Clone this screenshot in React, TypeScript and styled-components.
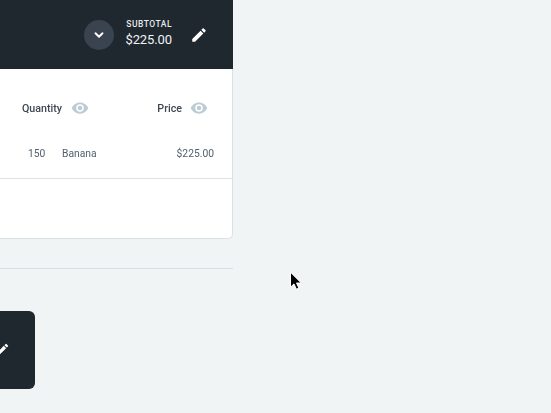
import React from "react";
import styled, { createGlobalStyle } from "styled-components";

const Global = createGlobalStyle`
  html, body { margin: 0; padding: 0; background: #f0f4f5; overflow: hidden; }
  body { width: 551px; height: 413px; font-family: "Roboto", "Liberation Sans", sans-serif; }
`;

const Page = styled.div`
  position: relative;
  width: 551px;
  height: 413px;
  display: flex;
  flex-direction: column;
  align-items: flex-start;
  overflow: hidden;
  filter: blur(0.2px);
`;

const Card = styled.section`
  width: 233px;
  height: 239px;
  display: flex;
  flex-direction: column;
  background: #fff;
  border-right: 1px solid #d9e1e7;
  border-bottom: 1px solid #d9e1e7;
  border-bottom-right-radius: 5px;
  box-sizing: border-box;
`;

const Header = styled.header`
  height: 69px;
  flex: none;
  background: #1f272f;
  margin-right: -1px;
  display: flex;
  align-items: center;
  justify-content: flex-end;
`;

const Toggle = styled.button`
  width: 30px;
  height: 30px;
  padding: 0;
  border: 0;
  border-radius: 50%;
  background: #3a4450;
  display: flex;
  align-items: center;
  justify-content: center;
  margin-right: 11px;
`;

const Subtotal = styled.div`
  display: flex;
  flex-direction: column;
  align-items: flex-end;
  color: #fff;
  margin-right: 18px;
  padding-bottom: 2px;
`;

const SubtotalLabel = styled.span`
  font-size: 8.5px;
  line-height: 11px;
  font-weight: 500;
  letter-spacing: 0.5px;
  color: #e6eaee;
`;

const SubtotalValue = styled.span`
  font-size: 13px;
  line-height: 18px;
  margin-top: 1px;
  font-weight: 400;
  letter-spacing: -0.1px;
  color: #f0f3f5;
`;

const EditButton = styled.span`
  display: flex;
  margin-right: 25px;
`;

const ColumnHeads = styled.div`
  height: 78px;
  flex: none;
  display: flex;
  align-items: center;
  box-sizing: border-box;
`;

const HeadCell = styled.div<{ $width: number; $gap: number }>`
  width: ${(p) => p.$width}px;
  flex: none;
  display: flex;
  align-items: center;
  justify-content: flex-end;
  gap: ${(p) => p.$gap}px;
  font-size: 10.7px;
  font-weight: 500;
  color: #3e4852;
`;

const DataRow = styled.div`
  height: 31px;
  flex: none;
  display: flex;
  align-items: flex-start;
  border-bottom: 1px solid #dbe3e8;
  font-size: 10.3px;
  line-height: 13px;
  color: #52606d;
`;

const Qty = styled.span`
  margin-left: 28px;
  width: 34px;
`;

const Product = styled.span`
  flex: 1;
`;

const RowPrice = styled.span`
  margin-right: 18px;
`;

const Rule = styled.hr`
  width: 233px;
  margin: 29px 0 0;
  border: 0;
  border-top: 1px solid #d5dfe6;
`;

const MiniCard = styled.div`
  width: 35px;
  height: 78px;
  margin-top: 42px;
  background: #1f272f;
  border-radius: 0 6px 6px 0;
  display: flex;
  align-items: center;
  overflow: hidden;
`;

const MiniIcon = styled.span`
  display: flex;
  margin-left: -5px;
  margin-bottom: 2px;
`;

const Cursor = styled.svg`
  position: absolute;
  left: 289px;
  top: 271px;
`;

const Pencil = ({ size }: { size: number }) => (
  <svg width={size} height={size} viewBox="0 0 24 24" fill="#fff">
    <path d="M3 17.25V21h3.75L17.81 9.94l-3.75-3.75L3 17.25zM20.71 7.04a1 1 0 0 0 0-1.41l-2.34-2.34a1 1 0 0 0-1.41 0l-1.83 1.83 3.75 3.75 1.83-1.83z" />
  </svg>
);

const Eye = () => (
  <svg width="18" height="18" viewBox="0 0 24 24" fill="#bcccd4">
    <path d="M12 4.5C7 4.5 2.73 7.61 1 12c1.73 4.39 6 7.5 11 7.5s9.27-3.11 11-7.5c-1.73-4.39-6-7.5-11-7.5zM12 17a5 5 0 1 1 0-10 5 5 0 0 1 0 10zm0-8a3 3 0 1 0 0 6 3 3 0 0 0 0-6z" />
  </svg>
);

export default function App() {
  return (
    <>
      <Global />
      <Page>
        <Card>
          <Header>
            <Toggle aria-label="Collapse">
              <svg width="14" height="14" viewBox="0 0 24 24" fill="none" stroke="#fff" strokeWidth="3.2" strokeLinecap="round" strokeLinejoin="round">
                <path d="M6 9l6 6 6-6" />
              </svg>
            </Toggle>
            <Subtotal>
              <SubtotalLabel>SUBTOTAL</SubtotalLabel>
              <SubtotalValue>$225.00</SubtotalValue>
            </Subtotal>
            <EditButton><Pencil size={18} /></EditButton>
          </Header>
          <ColumnHeads>
            <HeadCell $width={89} $gap={9}>Quantity <Eye /></HeadCell>
            <HeadCell $width={119} $gap={8}>Price <Eye /></HeadCell>
          </ColumnHeads>
          <DataRow>
            <Qty>150</Qty>
            <Product>Banana</Product>
            <RowPrice>$225.00</RowPrice>
          </DataRow>
        </Card>
        <Rule />
        <MiniCard>
          <MiniIcon><Pencil size={15} /></MiniIcon>
        </MiniCard>
        <Cursor width="14" height="20" viewBox="0 0 14 20">
          <path d="M1.5 1.2v15l3.5-3.3 2.4 5.3 2.5-1.1-2.4-5.1h4.8z" fill="#000" stroke="#fff" strokeWidth="1" />
        </Cursor>
      </Page>
    </>
  );
}
